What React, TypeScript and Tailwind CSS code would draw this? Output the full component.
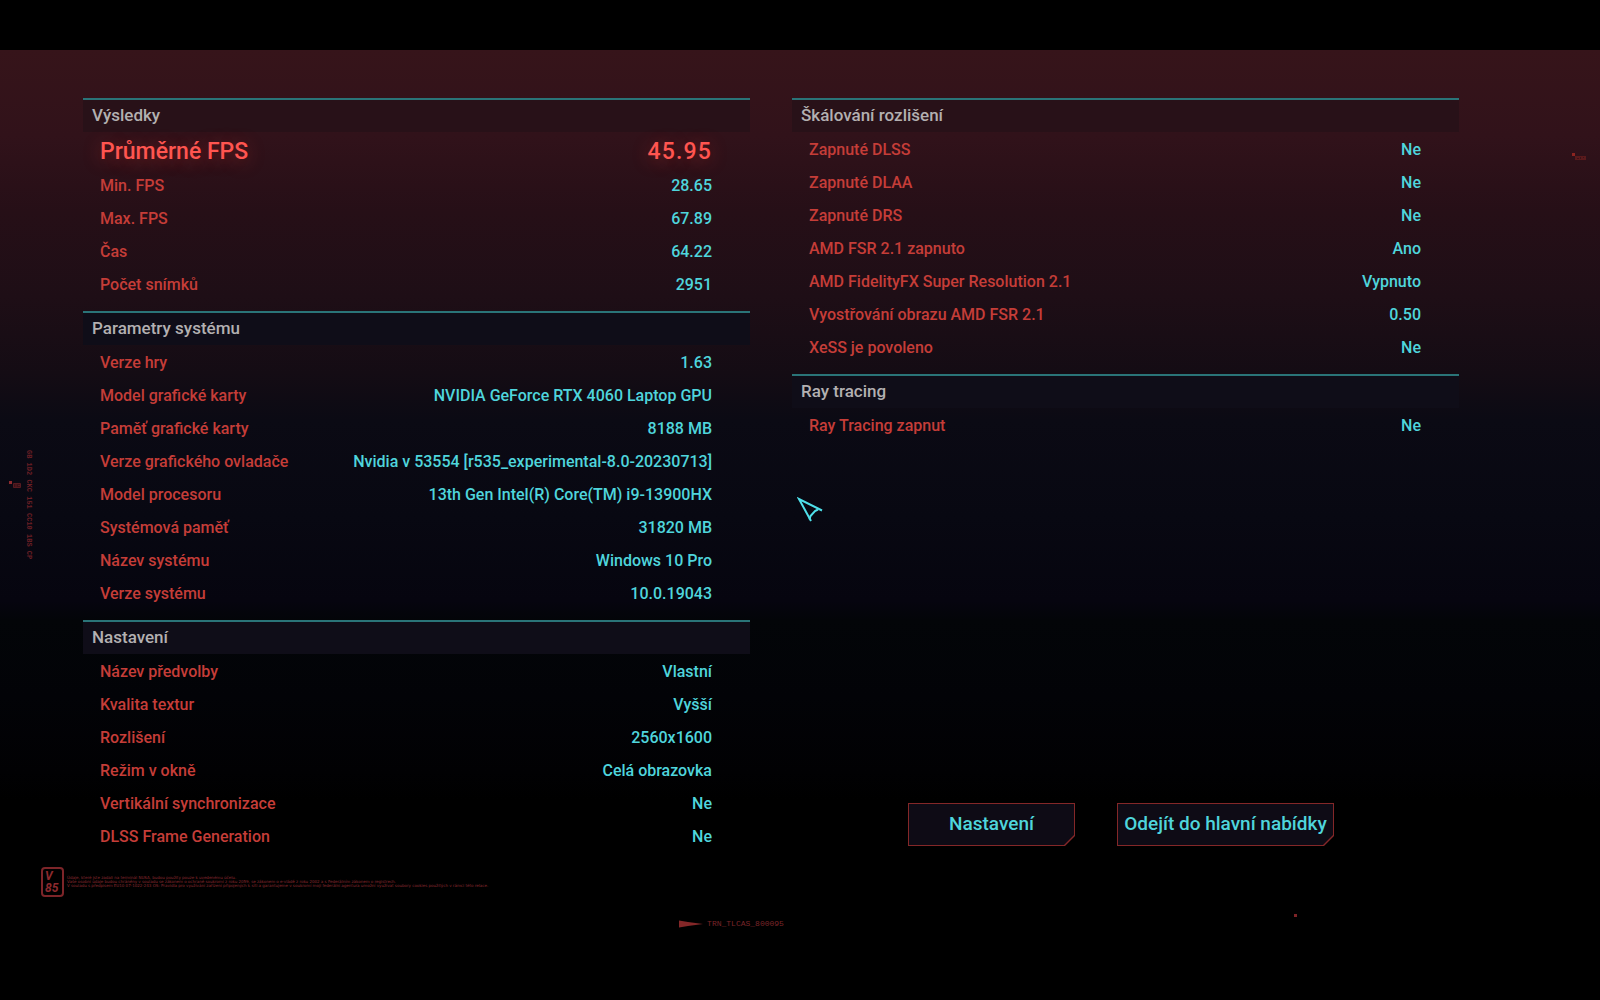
import { ReactNode } from 'react';

type Row = { l: string; v: string; big?: boolean };

const results: Row[] = [
  { l: 'Průměrné FPS', v: '45.95', big: true },
  { l: 'Min. FPS', v: '28.65' },
  { l: 'Max. FPS', v: '67.89' },
  { l: 'Čas', v: '64.22' },
  { l: 'Počet snímků', v: '2951' },
];

const system: Row[] = [
  { l: 'Verze hry', v: '1.63' },
  { l: 'Model grafické karty', v: 'NVIDIA GeForce RTX 4060 Laptop GPU' },
  { l: 'Paměť grafické karty', v: '8188 MB' },
  { l: 'Verze grafického ovladače', v: 'Nvidia v 53554 [r535_experimental-8.0-20230713]' },
  { l: 'Model procesoru', v: '13th Gen Intel(R) Core(TM) i9-13900HX' },
  { l: 'Systémová paměť', v: '31820 MB' },
  { l: 'Název systému', v: 'Windows 10 Pro' },
  { l: 'Verze systému', v: '10.0.19043' },
];

const settings: Row[] = [
  { l: 'Název předvolby', v: 'Vlastní' },
  { l: 'Kvalita textur', v: 'Vyšší' },
  { l: 'Rozlišení', v: '2560x1600' },
  { l: 'Režim v okně', v: 'Celá obrazovka' },
  { l: 'Vertikální synchronizace', v: 'Ne' },
  { l: 'DLSS Frame Generation', v: 'Ne' },
];

const scaling: Row[] = [
  { l: 'Zapnuté DLSS', v: 'Ne' },
  { l: 'Zapnuté DLAA', v: 'Ne' },
  { l: 'Zapnuté DRS', v: 'Ne' },
  { l: 'AMD FSR 2.1 zapnuto', v: 'Ano' },
  { l: 'AMD FidelityFX Super Resolution 2.1', v: 'Vypnuto' },
  { l: 'Vyostřování obrazu AMD FSR 2.1', v: '0.50' },
  { l: 'XeSS je povoleno', v: 'Ne' },
];

const rayTracing: Row[] = [{ l: 'Ray Tracing zapnut', v: 'Ne' }];

function Section({ title, rows, warm }: { title: string; rows: Row[]; warm?: boolean }) {
  return (
    <section className="pb-[10px]">
      <h2 className={`flex h-[34px] items-center border-t-2 border-[#2a7478] pl-[9px] text-[17px] font-medium text-[#b3b0b1] ${warm ? 'bg-[#281118]' : 'bg-[#0f0d18]'}`}>{title}</h2>
      <table className="mt-px w-full">
        <tbody>
          {rows.map(r => (
            <tr key={r.l} className={r.big ? 'h-[36px] text-[23px] text-[#ff5550] [text-shadow:0_3px_18px_rgba(255,60,50,0.4)]' : 'h-[33px] text-[16px]'}>
              <th scope="row" className={`py-0 pl-[17px] text-left leading-none font-medium whitespace-nowrap ${r.big ? '' : 'text-[#c53d38]'}`}>{r.l}</th>
              <td className={`py-0 pr-[38px] text-right leading-none font-medium whitespace-nowrap ${r.big ? 'tracking-wider' : 'text-[#4fd5dc]'}`}>{r.v}</td>
            </tr>
          ))}
        </tbody>
      </table>
    </section>
  );
}

function CutButton({ children, width }: { children: ReactNode; width: string }) {
  return (
    <button type="button" className={`h-[43px] bg-[#842728] p-px [clip-path:polygon(0_0,100%_0,100%_calc(100%-10px),calc(100%-10px)_100%,0_100%)] ${width}`}>
      <span className="flex h-full items-center justify-center bg-[#0e0b15] text-[19px] font-medium whitespace-nowrap text-[#4fd5dc] [clip-path:polygon(0_0,100%_0,100%_calc(100%-10px),calc(100%-10px)_100%,0_100%)]">
        {children}
      </span>
    </button>
  );
}

export default function App() {
  return (
    <div className="min-h-screen overflow-hidden bg-black pt-[50px] font-['Roboto',sans-serif]">
      <main className="relative min-h-[950px] bg-[linear-gradient(to_bottom,#36141a_0%,#31121a_9%,#260f17_17%,#1e0e16_26%,#140c14_34%,#0b0a14_39%,#080812_49%,#06050f_58%,#030508_60%,#020307_68%,#010103_76%,#000000_79%)]">
        <div className="grid grid-cols-2 gap-[42px] pt-12 pr-[141px] pl-[83px]">
          <div>
            <Section title="Výsledky" rows={results} warm />
            <Section title="Parametry systému" rows={system} />
            <Section title="Nastavení" rows={settings} />
          </div>
          <div className="flex flex-col">
            <Section title="Škálování rozlišení" rows={scaling} warm />
            <Section title="Ray tracing" rows={rayTracing} />
            <div className="mt-auto flex justify-center gap-[42px] pr-[9px] pb-[17px]">
              <CutButton width="w-[167px]">Nastavení</CutButton>
              <CutButton width="w-[217px]">Odejít do hlavní nabídky</CutButton>
            </div>
          </div>
        </div>

        <footer>
          <div className="mt-1 flex items-center gap-[3px] pl-[41px] text-[#8c2a30]">
            <div className="flex h-[30px] w-[23px] flex-col justify-center rounded-[4px] border-2 border-[#7d2529] pl-[2px] text-[12px] leading-[12px] font-bold text-[#8c2a2e] italic">
              <span>V</span>
              <span>85</span>
            </div>
            <div className="font-['DejaVu_Sans',sans-serif] text-[4px] leading-[4px] whitespace-nowrap">
              <p>Údaje, které jste zadali na terminál NUSA, budou použity pouze k uvedenému účelu.</p>
              <p>Vaše osobní údaje budou chráněny v souladu se zákonem o ochraně soukromí z roku 2059, se zákonem o e-vládě z roku 2002 a s Federálním zákonem o registrech.</p>
              <p>V souladu s předpisem EU10 07-1022-243 OS: Pravidla pro využívání zařízení připojených k síti a garantujeme v soukromí moji federální agentura umožní využívat soubory cookies použitých v rámci této relace.</p>
            </div>
          </div>
          <div className="mt-5 flex items-center justify-center gap-1 pr-[137px] font-['Liberation_Mono',monospace] text-[8px] leading-[14px] text-[#7a2529]">
            <svg width="24" height="8" viewBox="0 0 24 8" aria-hidden="true">
              <path d="M0 0.5 L9 2 L24 4 L9 6 L0 7.5 Z" fill="#842728" />
            </svg>
            <span>TRN_TLCAS_800095</span>
          </div>
        </footer>

        {/* HUD noise around the edges */}
        <div className="absolute top-[400px] left-6 font-['Liberation_Mono',monospace] text-[7px] leading-[10px] font-bold whitespace-nowrap text-[#6b1f25] [writing-mode:vertical-rl]">GB 1D2 CKC 151 CC10 1BS CP</div>
        <svg className="absolute top-[430px] left-2" width="14" height="10" viewBox="0 0 14 10" aria-hidden="true">
          <rect x="1" y="1" width="3" height="3" fill="#8c2a2e" />
          <path d="M5.5 3.5H12.5V7.5H5.5Z M8 3.5V7.5 M10 5.5H12" fill="#3a1218" stroke="#571a20" />
        </svg>
        <svg className="absolute top-[102px] right-[13px]" width="16" height="10" viewBox="0 0 16 10" aria-hidden="true">
          <rect x="1" y="1" width="3" height="3" fill="#8c2420" />
          <path d="M4 4H15V8H4Z" fill="#5a1a1c" />
          <path d="M6 6.5H8 M9.5 5V7 M12 5.5H13" stroke="#3a1218" fill="none" />
        </svg>
        <div className="absolute top-[864px] right-[303px] size-[3px] bg-[#7d2326]" />
        <svg className="absolute top-[447px] left-[797px]" width="26" height="26" viewBox="0 0 26 26" fill="none" stroke="#4fe0ea" strokeWidth="2" aria-hidden="true">
          <path d="M14 24 L2 2 L25 13.5" />
          <path d="M21 12.5 L18 14 L13.5 19 L12.5 22.5" />
        </svg>
      </main>
    </div>
  );
}
